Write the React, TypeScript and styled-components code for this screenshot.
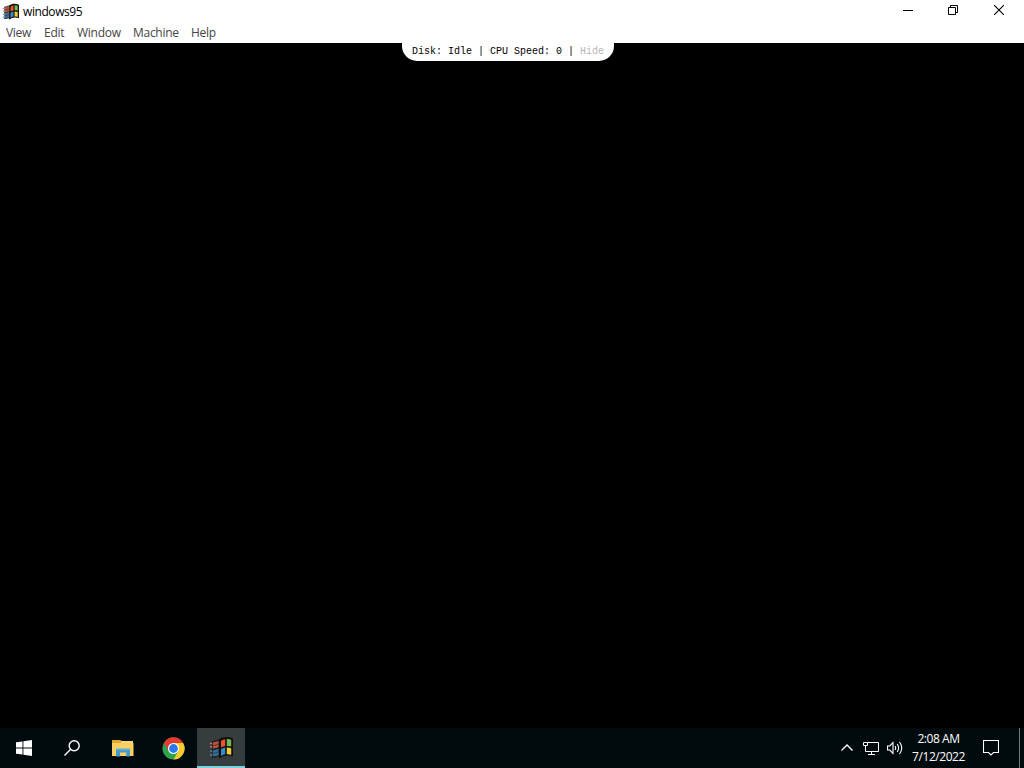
import React from 'react';
import styled, { createGlobalStyle } from 'styled-components';

const GlobalStyle = createGlobalStyle`
  * {
    box-sizing: border-box;
  }

  body {
    margin: 0;
    background: #000;
    overflow: hidden;
  }

  button {
    border: none;
    padding: 0;
    margin: 0;
    background: none;
    color: inherit;
    font: inherit;
  }

  svg {
    display: block;
    flex-shrink: 0;
  }
`;

const Desktop = styled.div`
  width: 100vw;
  height: 100vh;
  display: flex;
  flex-direction: column;
  background: #000;
  font-family: 'Open Sans', 'Noto Sans', sans-serif;
  font-size: 12px;
`;

const TitleBar = styled.header`
  height: 23px;
  display: flex;
  align-items: center;
  padding: 0 2px;
  background: #fff;
  color: #000;
`;

const Title = styled.span`
  flex: 1;
  margin-left: 4px;
  padding-top: 1px;
  font-size: 12px;
  line-height: 22px;
  letter-spacing: -0.42px;
`;

const WindowButton = styled.button<{ $width: number }>`
  width: ${(props) => props.$width}px;
  height: 20px;
  align-self: flex-start;
  display: grid;
  place-items: center;
`;

const MenuBar = styled.nav`
  height: 20px;
  display: flex;
  gap: 13px;
  padding-left: 6px;
  background: #fff;
  color: #444;
`;

const MenuItem = styled.button<{ $width: number }>`
  width: ${(props) => props.$width}px;
  height: 20px;
  line-height: 20px;
  text-align: left;
  white-space: nowrap;
  letter-spacing: -0.28px;
`;

const Screen = styled.main`
  flex: 1;
  display: flex;
  justify-content: center;
  align-items: flex-start;
  padding-right: 8px;
  background: #000;
`;

const StatusPanel = styled.div`
  width: 212px;
  height: 18px;
  padding: 0 10px;
  border-radius: 0 0 15px 15px;
  background: #fff;
  color: #000;
  font-family: 'Liberation Mono', monospace;
  font-size: 10px;
  line-height: 18px;
  white-space: pre;
`;

const HideLink = styled.span`
  color: #b5b5b5;
`;

const Taskbar = styled.footer`
  height: 40px;
  display: flex;
  background: #010b0e;
  color: #fff;
`;

const TaskButton = styled.button<{ $active?: boolean; $width?: number }>`
  width: ${(props) => props.$width ?? 48}px;
  height: 40px;
  display: grid;
  place-items: center;
  background: ${(props) => (props.$active ? '#353d3e' : 'transparent')};
  border-bottom: ${(props) => (props.$active ? '2px solid #7bd0e2' : 'none')};
`;

const Tray = styled.div`
  margin-left: auto;
  margin-right: 7px;
  display: flex;
  align-items: center;
`;

const TrayIcon = styled.button<{ $width: number }>`
  width: ${(props) => props.$width}px;
  height: 40px;
  display: grid;
  place-items: center;
`;

const Clock = styled.div`
  width: 63px;
  height: 40px;
  display: flex;
  flex-direction: column;
  align-items: center;
  padding-top: 2px;
  line-height: 18px;
  white-space: nowrap;
  letter-spacing: -0.45px;
`;

const ShowDesktop = styled.button`
  width: 5px;
  height: 40px;
  border-left: 1px solid #6c787c;
`;

const Win95Logo = ({ width, height }: { width: number; height: number }) => (
  <svg width={width} height={height} viewBox="0 0 24 24" preserveAspectRatio="none">
    <path d="M10 3.5C14 .5 19 .3 24 2.5v19c-5-2-9-1.500-14 2z" fill="#15100d" />
    <path d="M3 6.500 10 4.500v17L3 23z" fill="#282421" opacity=".5" />
    <path d="M12 5.200c1.500-1.200 2.800-1.700 4.200-1.900v7.200c-1.500.2-2.800.7-4.200 1.600z" fill="#e8562e" />
    <path d="M17.800 3.200c1.500-.1 2.800.2 4.400.8v7c-1.600-.6-2.900-.8-4.400-.6z" fill="#6ebd56" />
    <path d="M12 13.700c1.500-.9 2.800-1.400 4.200-1.600v7c-1.500.2-2.800.8-4.200 1.700z" fill="#358dcc" />
    <path d="M17.800 12c1.500-.1 2.800.2 4.400.8v6.800c-1.600-.6-2.900-.8-4.400-.6z" fill="#f2cf38" />
    <path d="m4 6.500 5.500-1.300v7L4 13.500z" fill="#b8503f" />
    <path d="m4 15 5.500-1.500v7L4 22z" fill="#31709e" />
    <path d="M1 7h2v1.500H1zM1 10.500h2V12H1z" fill="#cb7769" />
    <path d="M1 15h2v1.500H1zM1 19h2v1.500H1z" fill="#4b88b1" />
    <path d="M3 6.200C6 5 8 4.500 10.500 4M3 13.900c3 0 4.500-1 7-1.500M3 22c3 0 5-1 7.500-1.500" fill="none" stroke="#211d1a" strokeWidth="1.2" />
    <path d="M3 10c3 0 4.500-1 7-1.500M3 18c3 0 4.500-1 7-1.500" fill="none" stroke="#282421" strokeWidth=".6" />
  </svg>
);

const WindowsLogo = () => (
  <svg width="16" height="16" viewBox="0 0 16 16" fill="#fff">
    <path d="M0 2.300 6.500 1.400v6.100H0zM7.400 1.200 16 0v7.500H7.400zM0 8.500h6.500v6.100L0 13.700zM7.400 8.500H16V16l-8.600-1.200z" />
  </svg>
);

const SearchIcon = () => (
  <svg width="16" height="16" viewBox="0 0 16 16" fill="none" stroke="#fff" strokeWidth="1.4">
    <circle cx="10.2" cy="5.8" r="5" />
    <path d="M6.700 9.300.5 15.500" />
  </svg>
);

const FolderIcon = () => (
  <svg width="22" height="18" viewBox="0 0 22 18">
    <path d="M0 1h8l2 1h11v15H0z" fill="#e5a52f" />
    <path d="M9 2h12v2H9z" fill="#f6d77a" />
    <path d="M0 4h21.500v13H0z" fill="#f9cf62" />
    <path d="M4 17.500V9.700h14v7.800h-3.800v-4H8v4z" fill="#459bcd" />
    <path d="M4 9.700h14v1.500H4z" fill="#63b2da" />
  </svg>
);

const ChromeIcon = () => (
  <svg width="23" height="23" viewBox="0 0 24 24">
    <circle cx="12" cy="12" r="11.5" fill="#2ba34f" />
    <path d="M2 6.200a11.500 11.500 0 0 1 20 0H12L7 15z" fill="#e33b2e" />
    <path d="M12 6.200h10a11.500 11.500 0 0 1-10 17.300l5-8.600z" fill="#fbcb2e" />
    <circle cx="12" cy="12" r="5.8" fill="#fff" />
    <circle cx="12" cy="12" r="4.6" fill="#2979ec" />
  </svg>
);

const menuItems = [
  { label: 'View', width: 25 },
  { label: 'Edit', width: 20 },
  { label: 'Window', width: 43 },
  { label: 'Machine', width: 45 },
  { label: 'Help', width: 24 },
];

const App: React.FC = () => {
  return (
    <>
      <GlobalStyle />
      <Desktop>
        <TitleBar>
          <Win95Logo width={17} height={17} />
          <Title>windows95</Title>
          <WindowButton $width={44} aria-label="Minimize">
            <svg width="10" height="10" viewBox="0 0 10 10" shapeRendering="crispEdges">
              <path d="M0 5h10v1H0z" />
            </svg>
          </WindowButton>
          <WindowButton $width={46} aria-label="Restore">
            <svg width="10" height="10" viewBox="0 0 10 10" fill="none" stroke="#000">
              <path d="M.5 2.500h7v7h-7zM2.500 2.500v-2h7v7h-2" />
            </svg>
          </WindowButton>
          <WindowButton $width={46} aria-label="Close">
            <svg width="10" height="10" viewBox="0 0 10 10" fill="none" stroke="#000" strokeWidth="1.1">
              <path d="m0 0 10 10M10 0 0 10" />
            </svg>
          </WindowButton>
        </TitleBar>
        <MenuBar>
          {menuItems.map((item) => (
            <MenuItem key={item.label} $width={item.width}>
              {item.label}
            </MenuItem>
          ))}
        </MenuBar>
        <Screen>
          <StatusPanel>
            Disk: Idle | CPU Speed: 0 | <HideLink>Hide</HideLink>
          </StatusPanel>
        </Screen>
        <Taskbar>
          <TaskButton aria-label="Start">
            <WindowsLogo />
          </TaskButton>
          <TaskButton aria-label="Search">
            <SearchIcon />
          </TaskButton>
          <TaskButton $width={53} aria-label="File Explorer">
            <FolderIcon />
          </TaskButton>
          <TaskButton aria-label="Chrome">
            <ChromeIcon />
          </TaskButton>
          <TaskButton $active aria-label="windows95">
            <Win95Logo width={24} height={23} />
          </TaskButton>
          <Tray>
            <TrayIcon $width={24} aria-label="Show hidden icons">
              <svg width="12" height="8" viewBox="0 0 12 8" fill="none" stroke="#fff" strokeWidth="1.4">
                <path d="M.5 6.500 6 1l5.500 5.500" />
              </svg>
            </TrayIcon>
            <TrayIcon $width={24} aria-label="Network">
              <svg width="16" height="14" viewBox="0 0 16 14" fill="none" stroke="#fff">
                <path d="M4.500 1.500h11v9h-13v-6M8.500 10.500v3M5 13.500h7M.5 1.500h4v3h-4z" />
              </svg>
            </TrayIcon>
            <TrayIcon $width={24} aria-label="Volume">
              <svg width="16" height="14" viewBox="0 0 16 14" fill="none" stroke="#fff" strokeWidth="1.1">
                <path d="M.5 5h2.300L6 1.700v10.600L2.800 9H.5zM8 5q1.400 2 0 4M10.200 3q2.800 4 0 8M12.500 1q4.500 6 0 12" />
              </svg>
            </TrayIcon>
            <Clock>
              <span>2:08 AM</span>
              <span>7/12/2022</span>
            </Clock>
            <TrayIcon $width={42} aria-label="Notifications">
              <svg width="16" height="16" viewBox="0 0 16 16" fill="none" stroke="#fff" strokeWidth="1.1">
                <path d="M.5.5h15v12h-5L8 15l-2.500-2.500h-5z" />
              </svg>
            </TrayIcon>
          </Tray>
          <ShowDesktop aria-label="Show desktop" />
        </Taskbar>
      </Desktop>
    </>
  );
};

export default App;
